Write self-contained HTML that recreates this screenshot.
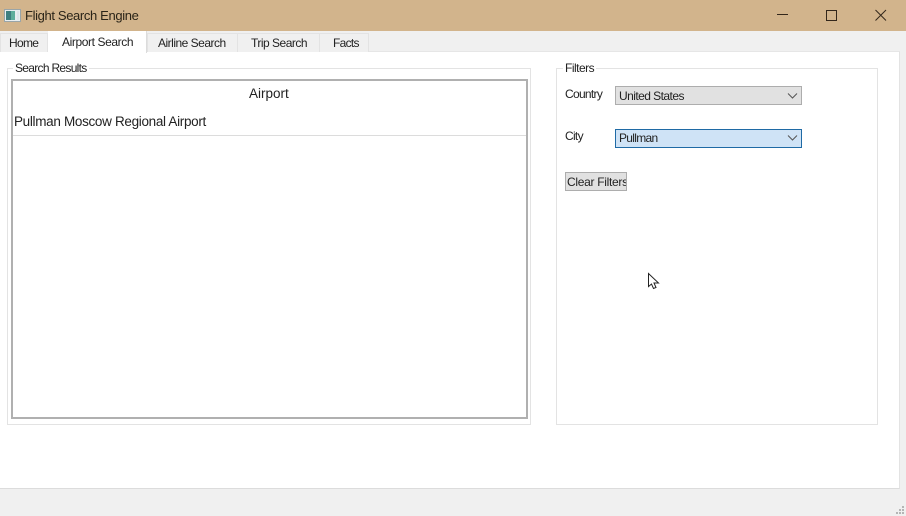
<!DOCTYPE html>
<html><head><meta charset="utf-8">
<style>
html,body{margin:0;padding:0;width:906px;height:516px;overflow:hidden;background:#f0f0f0}
*{box-sizing:border-box}
body{position:relative;font-family:"Liberation Sans",sans-serif;font-size:12px;color:#222;filter:blur(.3px)}
.a{position:absolute}
.t{position:absolute;white-space:nowrap;line-height:16px}
</style></head><body>
<div class="a" style="left:0;top:0;width:906px;height:31px;background:#d2b48c"></div>
<svg class="a" style="left:4px;top:9px" width="17" height="13" viewBox="0 0 17 13"><rect width="16" height="12" x=".5" y=".5" fill="#e8eef0" stroke="#9aa5a8"/><rect x="2" y="2" width="5" height="9" fill="#3f7f80"/><rect x="7" y="2" width="4" height="9" fill="#5fae9c"/><rect x="13" y="2" width="2" height="9" fill="#dfe6ea"/></svg>
<div class="t" style="left:25px;top:8px;font-size:13px;letter-spacing:-.36px;color:#2a2418">Flight Search Engine</div>
<svg class="a" style="left:770px;top:0" width="136" height="31" viewBox="0 0 136 31" fill="none" stroke="#33271b" stroke-width="1"><path d="M7 14.500H18"/><rect x="56.500" y="10.500" width="10" height="10"/><path d="M105.500 10L116 20.500M116 10L105.500 20.500"/></svg>

<div class="a" style="left:0;top:51px;width:900px;height:438px;background:#fff;border-right:1px solid #e3e3e3;border-bottom:1px solid #dcdcdc;border-top:1px solid #e6e6e6"></div>
<div class="a" style="left:0;top:33px;width:48px;height:19px;background:#f0f0f0;border:1px solid #e3e3e3;border-bottom:0"></div>
<div class="a" style="left:147px;top:33px;width:91px;height:19px;background:#f0f0f0;border:1px solid #e3e3e3;border-bottom:0"></div>
<div class="a" style="left:238px;top:33px;width:82px;height:19px;background:#f0f0f0;border:1px solid #e3e3e3;border-bottom:0;border-left:0"></div>
<div class="a" style="left:320px;top:33px;width:49px;height:19px;background:#f0f0f0;border:1px solid #e3e3e3;border-bottom:0;border-left:0"></div>
<div class="a" style="left:48px;top:31px;width:99px;height:22px;background:#fff;border-right:1px solid #dcdcdc"></div>
<div class="t" style="left:9px;top:35px;letter-spacing:-.7px">Home</div>
<div class="t" style="left:62px;top:34px;letter-spacing:-.4px">Airport Search</div>
<div class="t" style="left:158px;top:35px;letter-spacing:-.5px">Airline Search</div>
<div class="t" style="left:251px;top:35px;letter-spacing:-.5px">Trip Search</div>
<div class="t" style="left:333px;top:35px;letter-spacing:-.7px">Facts</div>

<div class="a" style="left:7px;top:68px;width:524px;height:357px;border:1px solid #e3e3e3"></div>
<div class="t" style="left:13px;top:60px;background:#fff;padding:0 2px;letter-spacing:-.7px">Search Results</div>
<div class="a" style="left:11px;top:79px;width:517px;height:340px;border:2px solid #b0b0b0;background:#fff"></div>
<div class="a" style="left:13px;top:135px;width:513px;height:1px;background:#dcdcdc"></div>
<div class="t" style="left:249px;top:86px;font-size:13.500px">Airport</div>
<div class="t" style="left:14px;top:114px;font-size:13.500px;letter-spacing:-.32px">Pullman Moscow Regional Airport</div>

<div class="a" style="left:556px;top:68px;width:322px;height:357px;border:1px solid #e3e3e3"></div>
<div class="t" style="left:563px;top:60px;background:#fff;padding:0 2px;letter-spacing:-.5px">Filters</div>
<div class="t" style="left:565px;top:86px;letter-spacing:-.7px">Country</div>
<div class="t" style="left:565px;top:128px;letter-spacing:-.7px">City</div>
<div class="a" style="left:615px;top:86px;width:187px;height:19px;background:#e1e1e1;border:1px solid #adadad"></div>
<div class="t" style="left:619px;top:88px;letter-spacing:-.55px">United States</div>
<div class="a" style="left:615px;top:129px;width:187px;height:19px;background:#cfe3f6;border:1px solid #1f6aa5"></div>
<div class="t" style="left:619px;top:130px;letter-spacing:-.7px">Pullman</div>
<svg class="a" style="left:787px;top:92px" width="12" height="50" viewBox="0 0 12 50" fill="none" stroke="#555" stroke-width="1"><path d="M1 1.500L5.500 6L10 1.500"/><path d="M1 43.500L5.500 48L10 43.500"/></svg>
<div class="a" style="left:565px;top:172px;width:62px;height:19px;background:#e1e1e1;border:1px solid #adadad;overflow:hidden"><div class="t" style="left:1px;top:1px;letter-spacing:-.3px">Clear Filters</div></div>

<svg class="a" style="left:647px;top:272px" width="14" height="19" viewBox="0 0 14 19"><path d="M1.500 1.500V14.500L4.500 12L6.500 16.500L9 15.500L7 11H11.500Z" fill="#fff" stroke="#222" stroke-width="1"/></svg>
<svg class="a" style="left:894px;top:505px" width="12" height="11" viewBox="0 0 12 11" fill="#b5b5b5"><rect x="8" y="1" width="2" height="2"/><rect x="5" y="4" width="2" height="2"/><rect x="8" y="4" width="2" height="2"/><rect x="2" y="7" width="2" height="2"/><rect x="5" y="7" width="2" height="2"/><rect x="8" y="7" width="2" height="2"/></svg>
</body></html>
